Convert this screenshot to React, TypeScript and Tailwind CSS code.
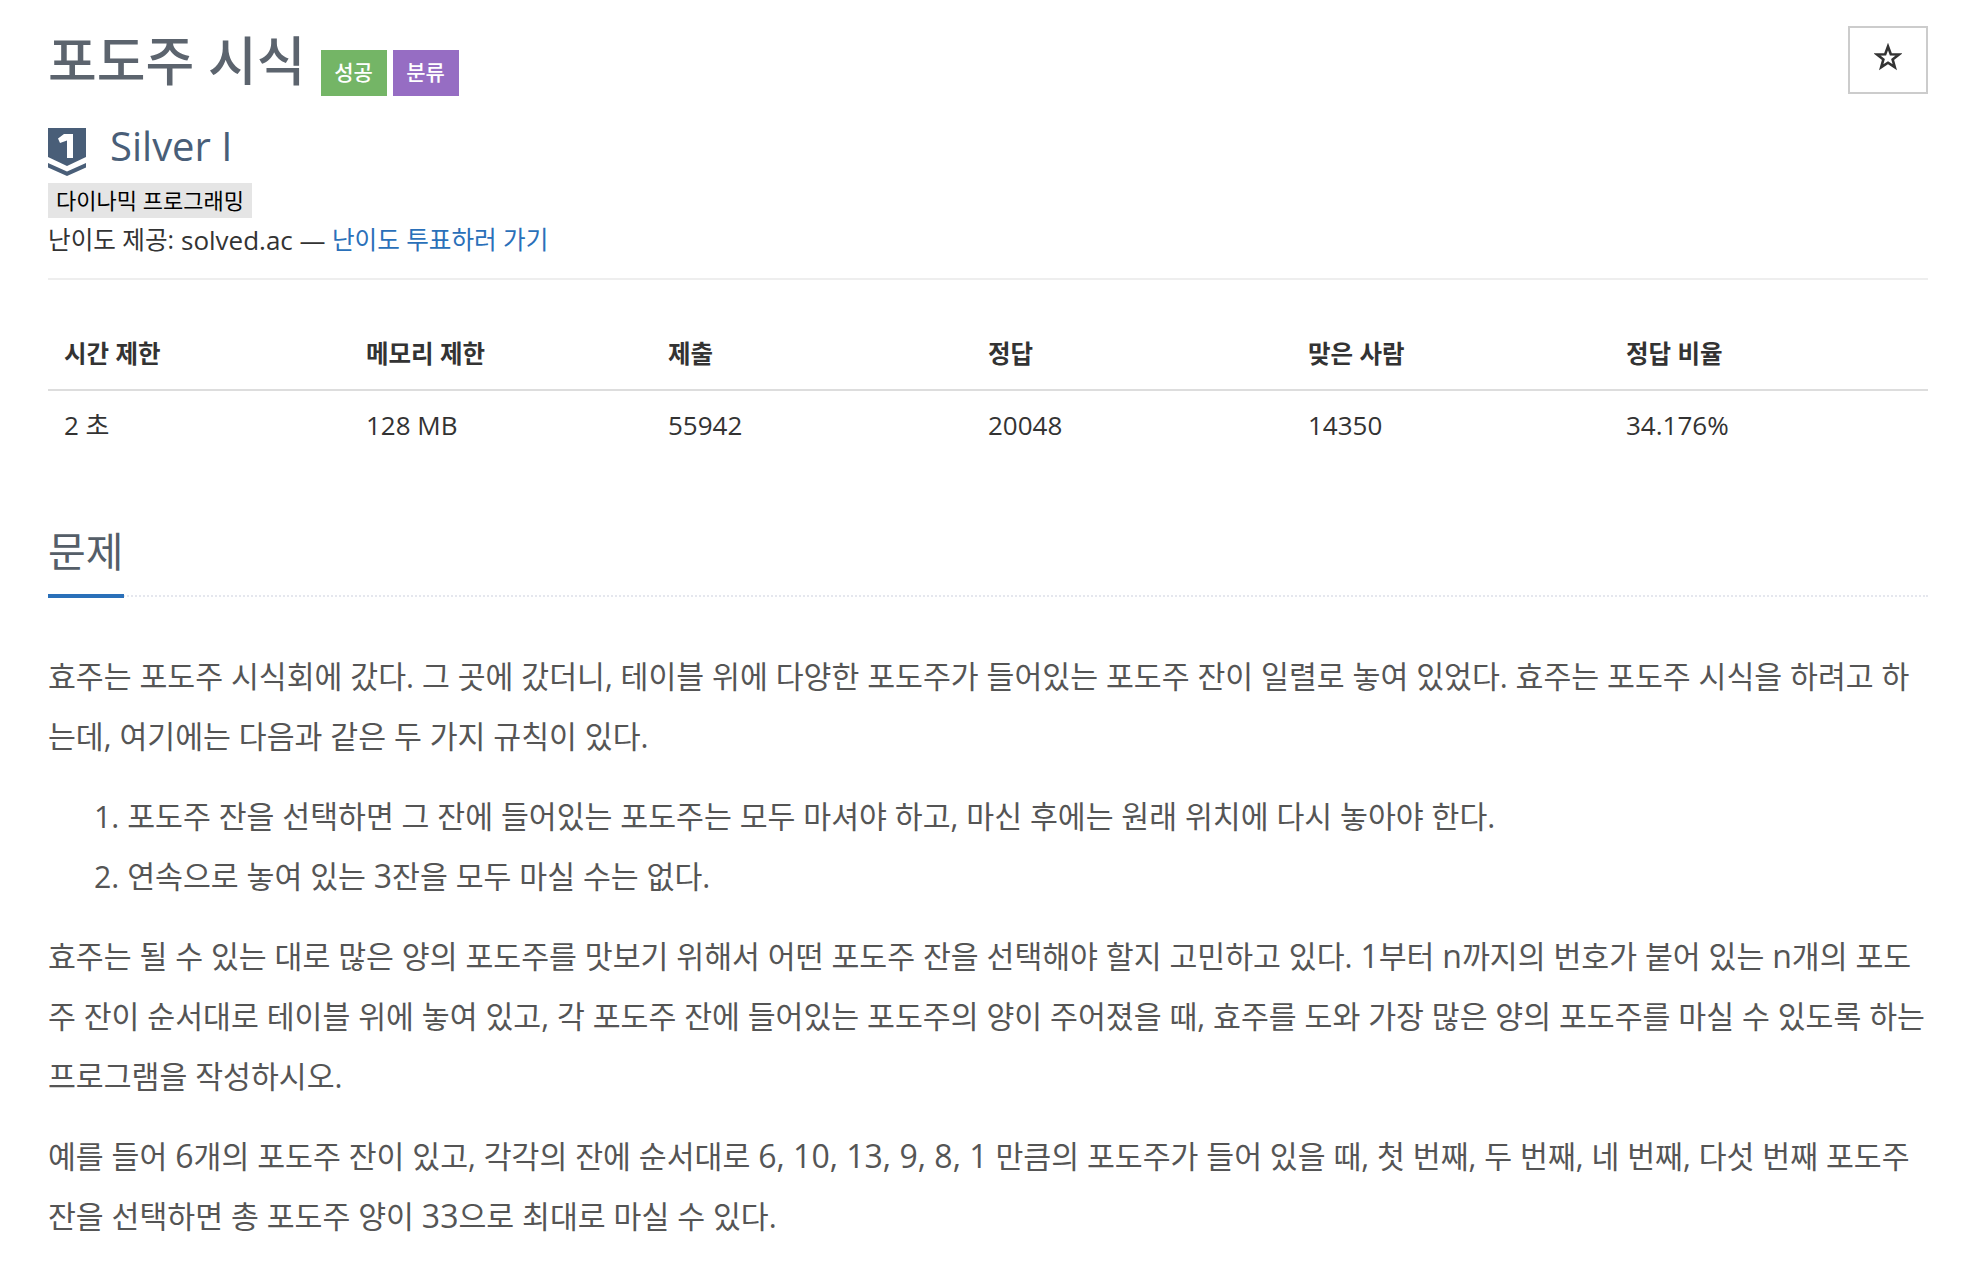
const sans = "font-['Open_Sans','Noto_Sans_CJK_KR',sans-serif]";

const cols = ["w-[302px]", "w-[302px]", "w-[320px]", "w-[320px]", "w-[318px]", "flex-1"];
const heads = ["시간 제한", "메모리 제한", "제출", "정답", "맞은 사람", "정답 비율"];
const vals = ["2 초", "128 MB", "55942", "20048", "14350", "34.176%"];

function L({ children }: { children: string }) {
  return <span className="text-[32px] leading-none">{children}</span>;
}

export default function App() {
  return (
    <div className={`${sans} h-[1268px] w-[1962px] overflow-hidden bg-white pl-[48px] pr-[34px] text-[#333]`}>
      <div className="flex items-start justify-between pt-[26px]">
        <div className="flex items-start">
          <h1 className="mt-[2px] text-[53px] font-medium leading-[66px] text-[#5c646e]">포도주 시식</h1>
          <span className="ml-[15px] mt-[24px] flex h-[46px] w-[66px] items-center justify-center bg-[#74b566] text-[21px] font-medium text-white">성공</span>
          <span className="ml-[6px] mt-[24px] flex h-[46px] w-[66px] items-center justify-center bg-[#966dc3] text-[21px] font-medium text-white">분류</span>
        </div>
        <div className="flex h-[68px] w-[80px] items-start justify-center border-2 border-[#ccc] pt-[15px]">
          <svg width="28" height="28" viewBox="0 0 28 28">
            <path d="M14 3.5 L16.8 11.2 L25 11.4 L18.6 16.4 L20.8 24.2 L14 19.7 L7.2 24.2 L9.4 16.4 L3 11.4 L11.2 11.2 Z" fill="none" stroke="#333" strokeWidth="2.6" strokeLinejoin="miter" />
          </svg>
        </div>
      </div>
      <div className="mt-[32px] flex items-start">
        <svg width="38" height="48" viewBox="0 0 38 48" className="mr-[24px]">
          <path d="M0 0 H38 V29 L19 38 L0 29 Z" fill="#495e78" />
          <path d="M0 35 L19 43.5 L38 35 V39.5 L19 48 L0 39.5 Z" fill="#495e78" />
          <path d="M16 6 H25 V30 H19 V12.5 L12 15 L10 10.5 Z" fill="#fff" />
        </svg>
        <span className="mt-[-6px] text-[40px] leading-[48px] text-[#495e78]">Silver I</span>
      </div>
      <div className="mt-[7px] flex h-[35px] w-[204px] items-center whitespace-nowrap bg-[#e5e5e5] pl-[8px] text-[22px] text-black">다이나믹 프로그래밍</div>
      <div className="mt-[3px] flex h-[38px] items-center whitespace-nowrap text-[24.6px] text-[#333]">
        난이도 제공: <span className="ml-[7px] text-[26px]">solved.ac —</span>&nbsp;<a className="text-[#2a70b9]">난이도 투표하러 가기</a>
      </div>
      <div className="mt-[19px] h-[2px] bg-[#eee]" />
      <div className="mt-[39px] flex h-[72px] items-center border-b-2 border-[#ddd]">
        {heads.map((h, i) => (
          <div key={h} className={`${cols[i]} pl-[16px] text-[24.5px] font-bold leading-[36px] text-[#333]`}>{h}</div>
        ))}
      </div>
      <div className="flex h-[67px] items-center">
        {vals.map((v, i) => (
          <div key={v} className={`${cols[i]} pl-[16px] text-[26px] leading-[36px] text-[#333]`}>{v}</div>
        ))}
      </div>
      <div className="mt-[64px] border-b-2 border-dotted border-[#e5e7ee]">
        <h2 className="mb-[-3px] w-[76px] whitespace-nowrap border-b-4 border-[#2a70b9] pb-[14px] text-[41px] leading-[58px] text-[#555e68]">문제</h2>
      </div>
      <div className="mt-[50px] text-[30.3px] leading-[60px] text-[#555]">
        <p className="whitespace-nowrap">효주는 포도주 시식회에 갔다. 그 곳에 갔더니, 테이블 위에 다양한 포도주가 들어있는 포도주 잔이 일렬로 놓여 있었다. 효주는 포도주 시식을 하려고 하<br />는데, 여기에는 다음과 같은 두 가지 규칙이 있다.</p>
        <ol className="mt-[20px] pl-[46px]">
          <li className="whitespace-nowrap">1. 포도주 잔을 선택하면 그 잔에 들어있는 포도주는 모두 마셔야 하고, 마신 후에는 원래 위치에 다시 놓아야 한다.</li>
          <li className="whitespace-nowrap">2. 연속으로 놓여 있는 <L>3</L>잔을 모두 마실 수는 없다.</li>
        </ol>
        <p className="mt-[20px] whitespace-nowrap">효주는 될 수 있는 대로 많은 양의 포도주를 맛보기 위해서 어떤 포도주 잔을 선택해야 할지 고민하고 있다. <L>1</L>부터 <L>n</L>까지의 번호가 붙어 있는 <L>n</L>개의 포도<br />주 잔이 순서대로 테이블 위에 놓여 있고, 각 포도주 잔에 들어있는 포도주의 양이 주어졌을 때, 효주를 도와 가장 많은 양의 포도주를 마실 수 있도록 하는<br />프로그램을 작성하시오.</p>
        <p className="mt-[20px] whitespace-nowrap">예를 들어 <L>6</L>개의 포도주 잔이 있고, 각각의 잔에 순서대로 <L>6, 10, 13, 9, 8, 1</L> 만큼의 포도주가 들어 있을 때, 첫 번째, 두 번째, 네 번째, 다섯 번째 포도주<br />잔을 선택하면 총 포도주 양이 <L>33</L>으로 최대로 마실 수 있다.</p>
      </div>
    </div>
  );
}
